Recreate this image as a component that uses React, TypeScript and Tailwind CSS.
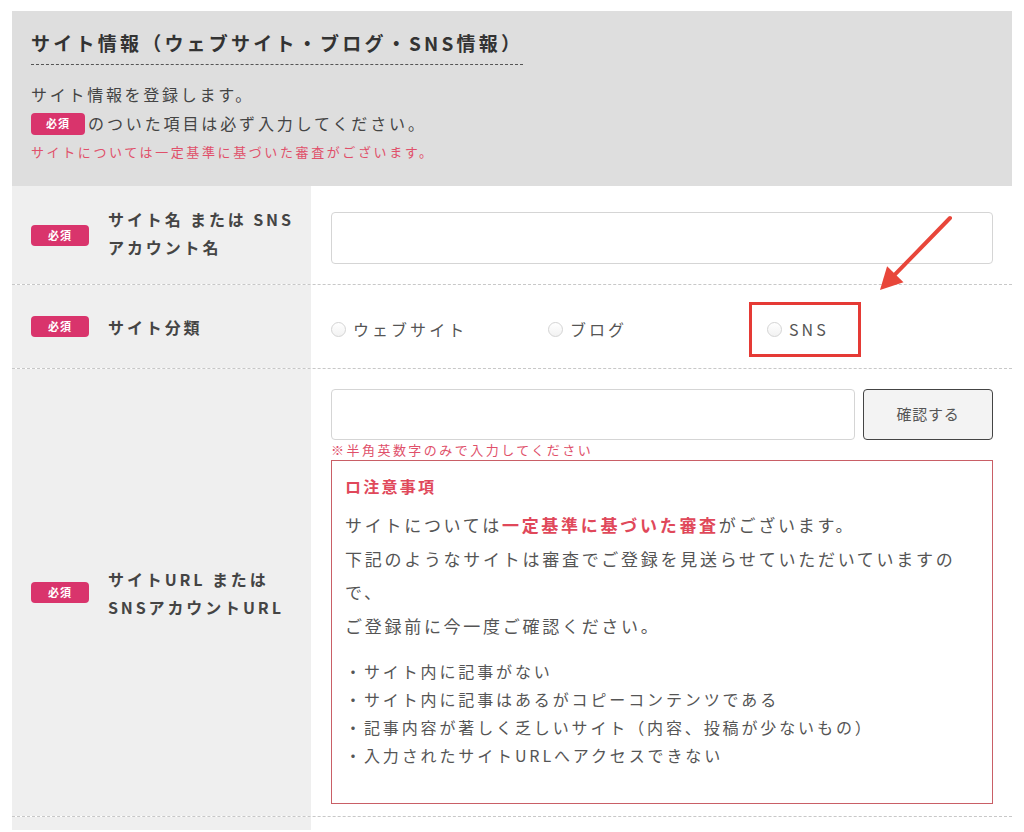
import React from "react";

const font = { fontFamily: '"Noto Sans CJK JP", "Noto Sans", sans-serif' };

const Badge = () => (
  <span className="inline-flex h-[21px] w-[58px] shrink-0 items-center justify-center rounded-[4px] bg-[#d9346c] text-[11px] font-bold tracking-[0.1em] text-white">
    必須
  </span>
);

const Radio = ({ label }: { label: string }) => (
  <label className="flex items-center gap-[7px] text-[16px] tracking-[0.19em] text-[#555]">
    <span className="h-[15px] w-[15px] rounded-full border border-[#d4d4d4] bg-gradient-to-b from-white to-[#f2f2f2]" />
    {label}
  </label>
);

const Label = ({ children }: { children: React.ReactNode }) => (
  <div className="flex w-[299px] shrink-0 items-center gap-[19px] bg-[#efefef] pl-[19px]">
    <Badge />
    <div className="text-[16px] font-bold leading-[28px] tracking-[0.18em] text-[#444]">{children}</div>
  </div>
);

export default function App() {
  return (
    <div className="relative bg-white px-[12px] pt-[11px]" style={font}>
      {/* header */}
      <div className="bg-[#dedede] px-[19px] pb-[20px] pt-[18px]">
        <h1 className="inline-block border-b border-dashed border-[#555] pb-[7px] text-[19px] font-bold leading-[28px] tracking-[0.17em] text-[#333]">
          サイト情報（ウェブサイト・ブログ・SNS情報）
        </h1>
        <p className="mt-[15px] text-[16px] leading-[29px] tracking-[0.17em] text-[#444]">サイト情報を登録します。</p>
        <p className="flex items-center gap-[3px] text-[16px] leading-[29px] tracking-[0.18em] text-[#444]">
          <span className="inline-flex h-[22px] w-[54px] items-center justify-center rounded-[4px] bg-[#d9346c] text-[11px] font-bold tracking-[0.1em] text-white">
            必須
          </span>
          のついた項目は必ず入力してください。
        </p>
        <p className="text-[13px] leading-[28px] tracking-[0.2em] text-[#e0506a]">
          サイトについては一定基準に基づいた審査がございます。
        </p>
      </div>

      {/* row 1 */}
      <div className="flex border-b border-dashed border-[#c8c8c8]">
        <Label>
          <div className="-mt-[4px]">
            サイト名 または SNS
            <br />
            アカウント名
          </div>
        </Label>
        <div className="flex-1 pb-[20px] pl-[20px] pr-[19px] pt-[26px]">
          <div className="h-[52px] rounded-[4px] border border-[#d5d5d5] bg-white" />
        </div>
      </div>

      {/* row 2 */}
      <div className="flex border-b border-dashed border-[#c8c8c8]">
        <Label>サイト分類</Label>
        <div className="flex h-[83px] flex-1 items-center pl-[20px] pr-[19px] pt-[5px]">
          <div className="w-[217px]">
            <Radio label="ウェブサイト" />
          </div>
          <div className="w-[201px]">
            <Radio label="ブログ" />
          </div>
          <div className="flex h-[55px] w-[112px] items-center border-[3px] border-[#e53a35] pl-[15px]">
            <Radio label="SNS" />
          </div>
        </div>
      </div>

      {/* row 3 */}
      <div className="flex border-b border-dashed border-[#c8c8c8]">
        <Label>
          サイトURL または
          <br />
          SNSアカウントURL
        </Label>
        <div className="flex-1 pb-[12px] pl-[20px] pr-[19px] pt-[20px]">
          <div className="flex gap-[8px]">
            <div className="h-[51px] flex-1 rounded-[4px] border border-[#d5d5d5] bg-white" />
            <button className="h-[51px] w-[130px] rounded-[4px] border-[1.5px] border-[#444] bg-[#f3f3f3] text-[15px] tracking-[0.05em] text-[#555]">
              確認する
            </button>
          </div>
          <p className="mt-[1px] text-[13px] leading-[18px] tracking-[0.19em] text-[#e0506a]">
            ※半角英数字のみで入力してください
          </p>
          <div className="mt-[1px] border-[1.5px] border-[#c95f66] px-[13px] pb-[34px] pt-[12px]">
            <p className="text-[16px] font-bold leading-[26px] tracking-[0.14em] text-[#e0485a]">ロ注意事項</p>
            <div className="mt-[9px] text-[17px] leading-[33.5px] tracking-[0.16em] text-[#555]">
              <p>
                サイトについては<span className="font-bold text-[#e0485a]">一定基準に基づいた審査</span>がございます。
              </p>
              <p>
                下記のようなサイトは審査でご登録を見送らせていただいていますの
                <br />
                で、
              </p>
              <p>ご登録前に今一度ご確認ください。</p>
            </div>
            <ul className="mt-[15px] text-[16px] leading-[28px] tracking-[0.18em] text-[#555]">
              <li>・サイト内に記事がない</li>
              <li>・サイト内に記事はあるがコピーコンテンツである</li>
              <li>・記事内容が著しく乏しいサイト（内容、投稿が少ないもの）</li>
              <li>・入力されたサイトURLへアクセスできない</li>
            </ul>
          </div>
        </div>
      </div>

      {/* next row (cut off) */}
      <div className="flex">
        <div className="h-[13px] w-[299px] bg-[#efefef]" />
        <div className="flex-1" />
      </div>

      {/* annotation arrow */}
      <svg className="absolute left-[870px] top-[210px]" width="90" height="90" viewBox="0 0 90 90">
        <line x1="80" y1="8" x2="25.3" y2="64.2" stroke="#e8463a" strokeWidth="4" strokeLinecap="round" />
        <polygon points="10,80 33.5,72.2 17.1,56.2" fill="#e8463a" />
      </svg>
    </div>
  );
}
